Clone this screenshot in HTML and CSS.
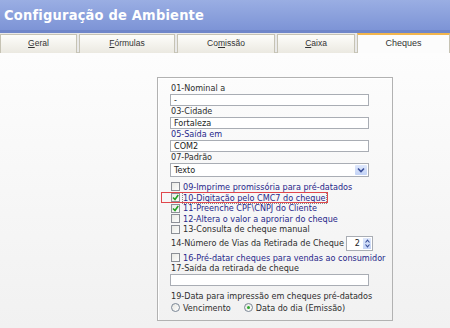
FILE: index.html
```html
<!DOCTYPE html>
<html>
<head>
<meta charset="utf-8">
<link rel="stylesheet" href="styles.css">
</head>
<body>
<div class="win">
  <div class="title">Configuração de Ambiente</div>
  <div class="tabs">
    <div class="tab t-geral"><u>G</u>eral</div>
    <div class="tab t-form"><u>F</u>órmulas</div>
    <div class="tab t-com">Co<u>m</u>issão</div>
    <div class="tab t-caixa"><u>C</u>aixa</div>
    <div class="tab t-cheq active">Cheques</div>
  </div>
  <div class="body">
    <div class="group">
      <div class="lbl">01-Nominal a</div>
      <div class="input">-</div>
      <div class="lbl">03-Cidade</div>
      <div class="input">Fortaleza</div>
      <div class="lbl blue">05-Saída em</div>
      <div class="input">COM2</div>
      <div class="lbl">07-Padrão</div>
      <div class="select"><span class="sel-text">Texto</span><span class="sel-btn"><svg width="8" height="6" viewBox="0 0 8 6"><path d="M1 1.5 L4 4.5 L7 1.5" fill="none" stroke="#3a4f9a" stroke-width="1.6"/></svg></span></div>
      <div class="checks">
        <div class="chk r11"><span class="box"></span><span class="blue">09-Imprime promissória para pré-datados</span></div>
        <div class="chk r11 hl"><span class="box"><svg width="7" height="7" viewBox="0 0 7 7"><path d="M1 3.5 L3 5.5 L6.2 1" fill="none" stroke="#22a022" stroke-width="1.6"/></svg></span><span class="blue focus">10-Digitação pelo CMC7 do cheque</span></div>
        <div class="chk r10"><span class="box"><svg width="7" height="7" viewBox="0 0 7 7"><path d="M1 3.5 L3 5.5 L6.2 1" fill="none" stroke="#22a022" stroke-width="1.6"/></svg></span><span class="blue">11-Preenche CPF\CNPJ do Cliente</span></div>
        <div class="chk r11"><span class="box"></span><span class="blue">12-Altera o valor a aproriar do cheque</span></div>
        <div class="chk r10"><span class="box"></span><span>13-Consulta de cheque manual</span></div>
      </div>
      <div class="spinrow">
        <span class="spin-lbl">14-Número de Vias da Retirada de Cheque</span>
        <span class="spin"><span class="spin-val">2</span><span class="spin-btn"><svg width="5" height="9" viewBox="0 0 5 9"><path d="M0.5 3.5 L2.5 1.2 L4.5 3.5 M0.5 5.5 L2.5 7.8 L4.5 5.5" fill="none" stroke="#3a4f9a" stroke-width="1.1"/></svg></span></span>
      </div>
      <div class="chk r11"><span class="box"></span><span class="blue">16-Pré-datar cheques para vendas ao consumidor</span></div>
      <div class="lbl">17-Saída da retirada de cheque</div>
      <div class="input"></div>
      <div class="lbl l19">19-Data para impressão em cheques pré-datados</div>
      <div class="radios">
        <span class="radio"></span><span class="r-lbl">Vencimento</span>
        <span class="radio on"></span><span>Data do dia (Emissão)</span>
      </div>
    </div>
  </div>
</div>
</body>
</html>
```

FILE: styles.css
```css
html, body {
  margin: 0;
  padding: 0;
}
body {
  width: 450px;
  height: 328px;
  overflow: hidden;
  background: #f6f6f6;
  font-family: "DejaVu Sans", sans-serif;
  font-stretch: condensed;
  font-size: 9px;
  color: #2e2e2e;
}
.win {
  display: flex;
  flex-direction: column;
  height: 328px;
}
.title {
  height: 30px;
  line-height: 30px;
  padding-left: 4px;
  background: linear-gradient(#9aaee3, #7d94d6);
  border-bottom: 3px solid #6f86c9;
  color: #fff;
  font-weight: bold;
  font-size: 14.5px;
  letter-spacing: 0.2px;
}
.tabs {
  display: flex;
  gap: 2px;
  height: 20px;
  background: #e9e9e9;
  border-bottom: 1px solid #c9c7bb;
  box-sizing: border-box;
  padding-top: 1px;
  font-family: "Liberation Sans", sans-serif;
  font-stretch: normal;
  font-size: 8.5px;
}
.tab {
  box-sizing: border-box;
  height: 19px;
  line-height: 17px;
  text-align: center;
  color: #333;
  background: linear-gradient(#fdfdfa, #ebe9e1);
  border: 1px solid #c6c3b4;
  border-bottom: none;
}
.t-geral { width: 77px; }
.t-form { width: 96px; }
.t-com { width: 98px; }
.t-caixa { width: 78px; }
.t-cheq { flex: 1; }
.tab.active {
  background: #fcfcfc;
  border-top: 2px solid #f2b54c;
  height: 20px;
  margin-top: -1px;
  line-height: 16px;
  font-size: 9px;
}
.body {
  flex: 1;
  background: linear-gradient(#fdfdfd, #f1f1f1);
  padding: 24px 0 0 157px;
}
.group {
  box-sizing: border-box;
  width: 236px;
  height: 244px;
  border: 1px solid #b2b2b2;
  box-shadow: inset 1px 1px 0 #fff;
  padding: 5px 0 0 12px;
}
.lbl {
  height: 11px;
  line-height: 11px;
  padding-left: 1px;
  white-space: nowrap;
}
.blue { color: #27278a; }
.input {
  box-sizing: border-box;
  width: 199px;
  height: 12px;
  line-height: 10px;
  border: 1px solid #a9adb4;
  background: #fff;
  padding-left: 3px;
  color: #222;
}
.select {
  box-sizing: border-box;
  display: flex;
  align-items: center;
  justify-content: space-between;
  width: 199px;
  height: 14px;
  border: 1px solid #a9adb4;
  background: #fff;
  padding: 0 1px 0 3px;
  color: #222;
}
.sel-btn {
  width: 12px;
  height: 10px;
  display: flex;
  align-items: center;
  justify-content: center;
  background: linear-gradient(#dfe8fc, #c3d3f6);
  border-radius: 1px;
}
.checks {
  margin-top: 4px;
}
.chk {
  display: flex;
  align-items: center;
  gap: 3px;
  white-space: nowrap;
  padding-left: 1px;
  position: relative;
}
.r11 { height: 11px; }
.r10 { height: 10px; }
.box {
  box-sizing: border-box;
  width: 9px;
  height: 9px;
  flex: none;
  border: 1px solid #8c8f96;
  background: linear-gradient(135deg, #e9e9e4, #fdfdfd);
  display: flex;
  align-items: center;
  justify-content: center;
}
.hl::after {
  content: "";
  position: absolute;
  left: -9px;
  top: 0;
  width: 167px;
  height: 11px;
  box-sizing: border-box;
  border: 1px solid #e0474b;
}
.focus {
  outline: 1px dotted #8a8a8a;
  outline-offset: 0;
}
.spinrow {
  display: flex;
  align-items: center;
  height: 18px;
  padding-left: 1px;
  white-space: nowrap;
}
.spin-lbl {
  width: 175px;
}
.spin {
  box-sizing: border-box;
  display: flex;
  align-items: center;
  justify-content: flex-end;
  width: 27px;
  height: 15px;
  border: 1px solid #a9adb4;
  background: #fff;
  padding-right: 1px;
  gap: 3px;
  color: #222;
}
.spin-btn {
  width: 8px;
  height: 11px;
  display: flex;
  align-items: center;
  justify-content: center;
  background: linear-gradient(#dfe8fc, #c3d3f6);
}
.l19 {
  margin-top: 5px;
}
.radios {
  display: flex;
  align-items: center;
  height: 11px;
  padding-left: 1px;
  gap: 3px;
  white-space: nowrap;
}
.r-lbl {
  margin-right: 10px;
}
.radio {
  box-sizing: border-box;
  width: 9px;
  height: 9px;
  border-radius: 50%;
  border: 1px solid #7b8796;
  background: linear-gradient(135deg, #e6e6e0, #fff);
  display: flex;
  align-items: center;
  justify-content: center;
}
.radio.on::after {
  content: "";
  width: 3px;
  height: 3px;
  border-radius: 50%;
  background: #2ea82e;
}
```
